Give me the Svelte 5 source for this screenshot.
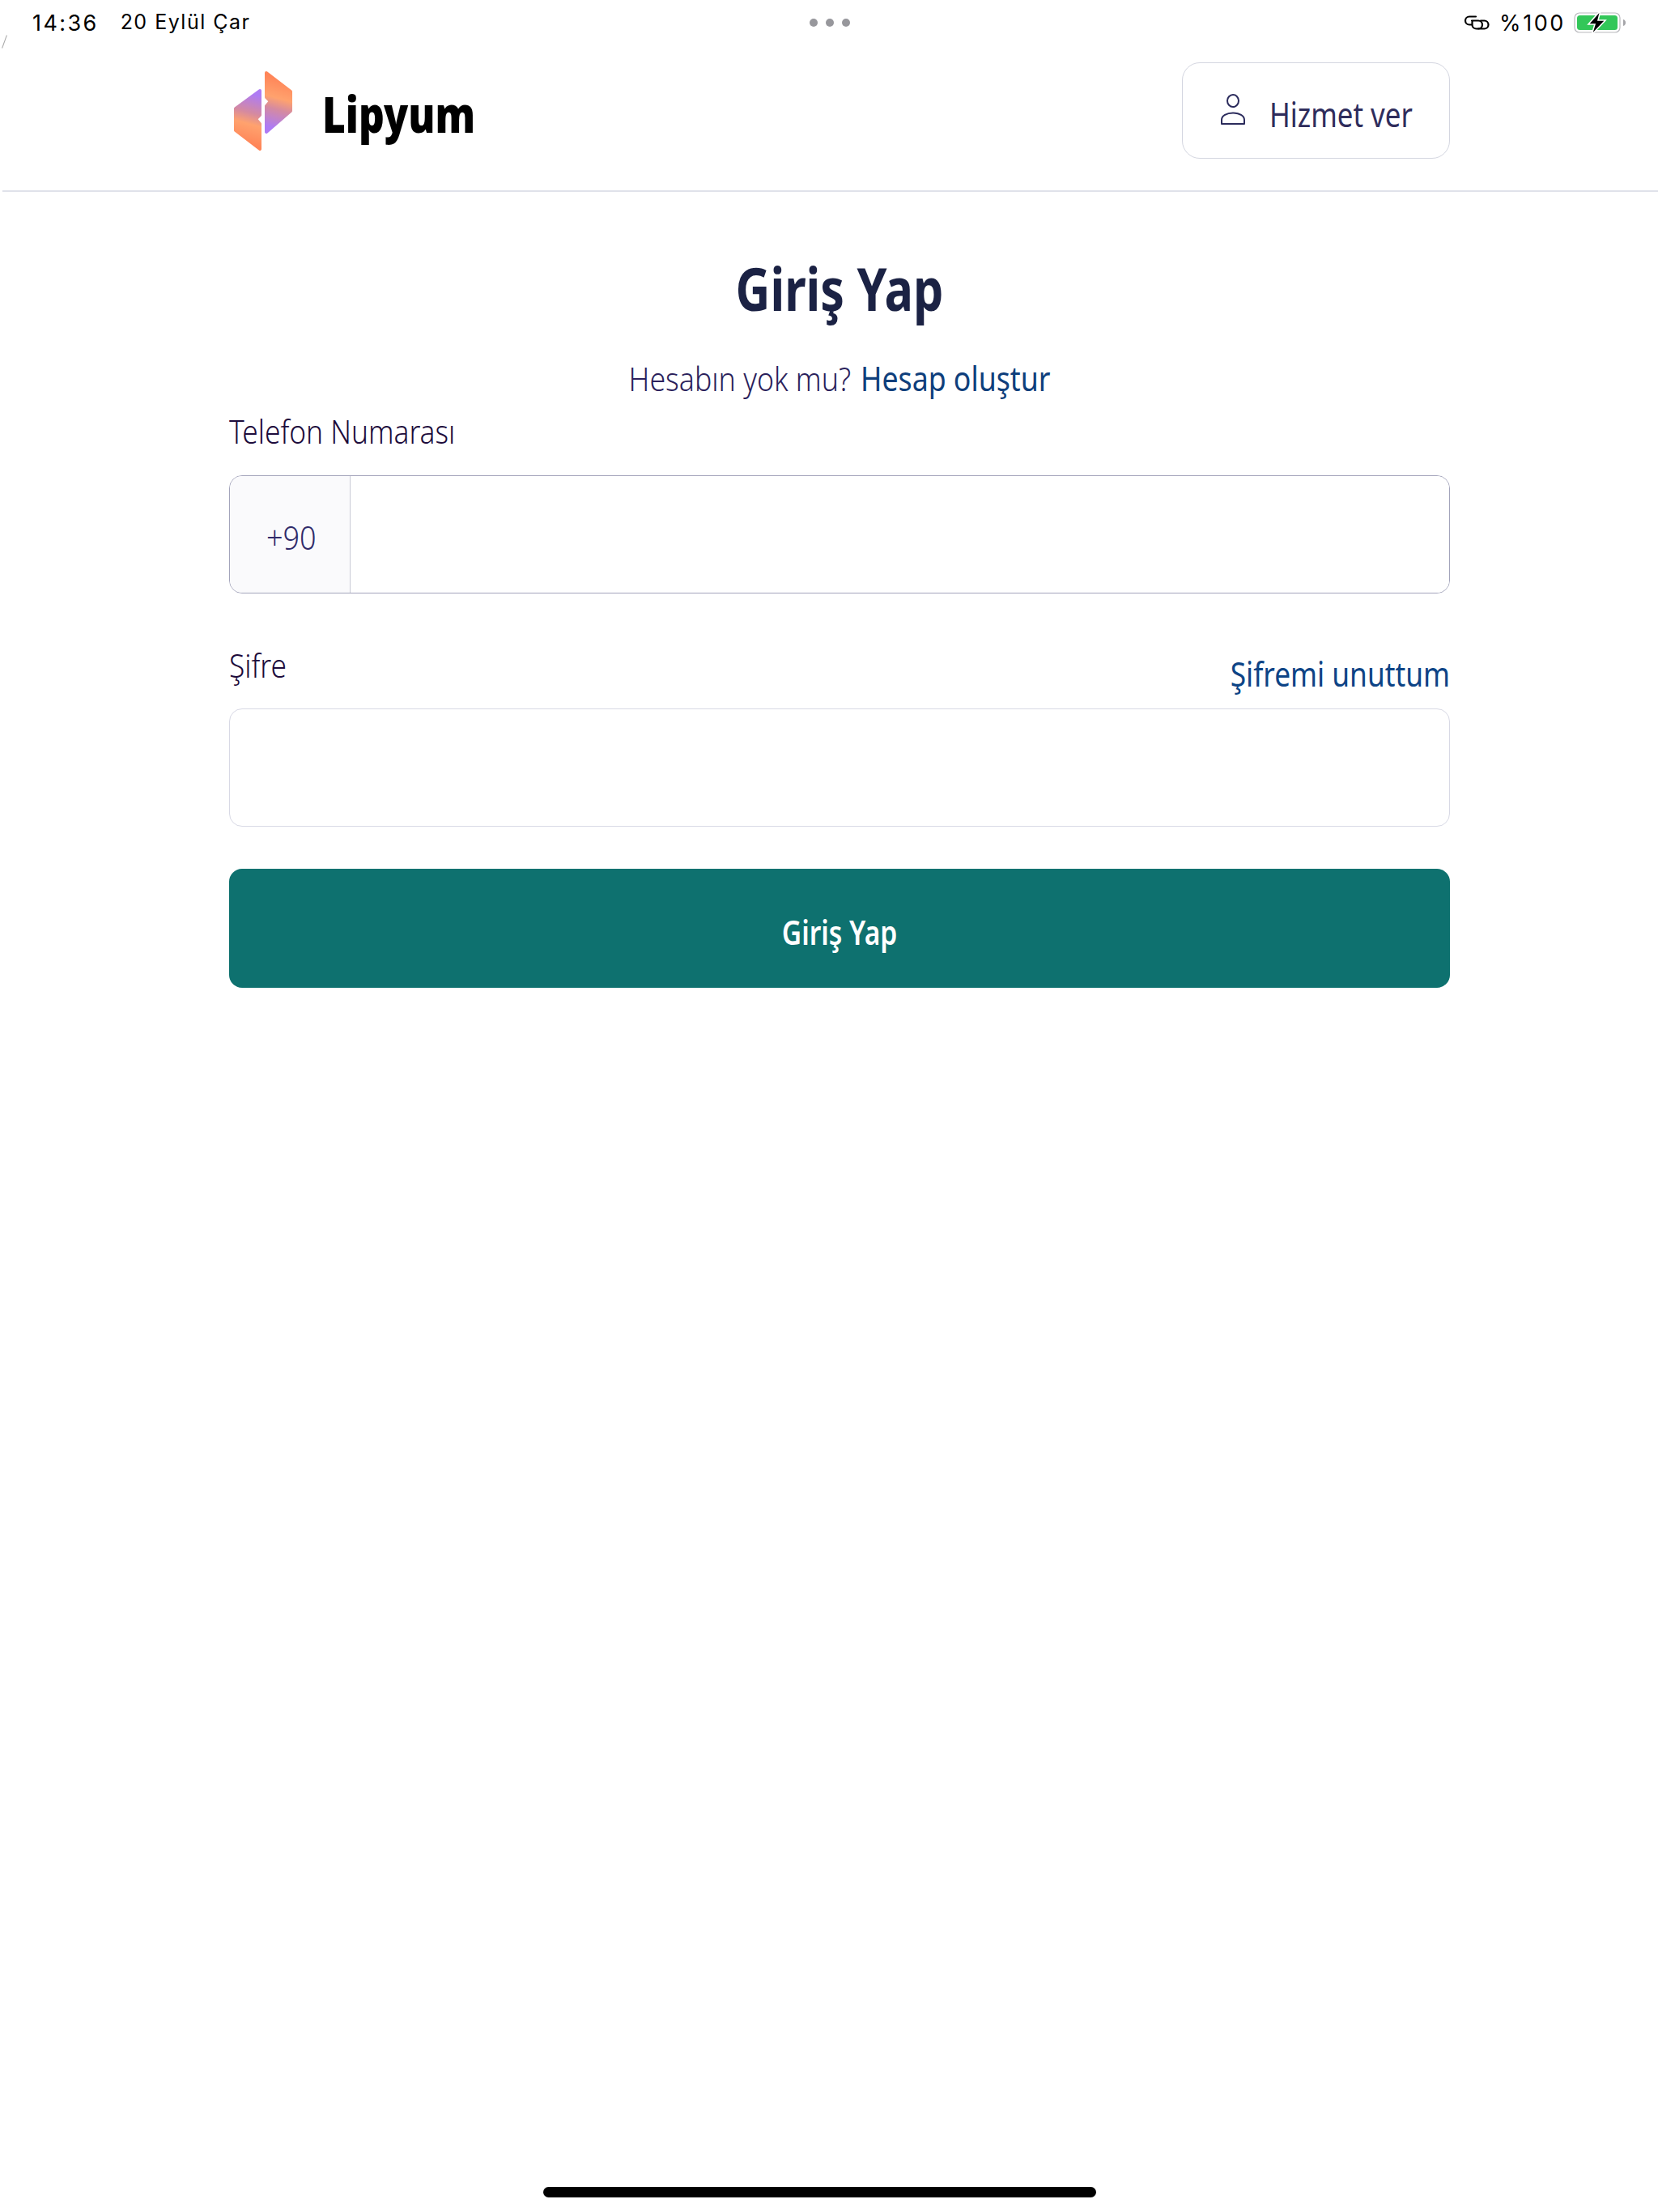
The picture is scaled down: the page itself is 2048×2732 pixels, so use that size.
<script>
	let phone = $state('');
	let password = $state('');
</script>

<div class="page">
	<div class="status">
		<div class="status-left">
			<span>14:36</span>
			<span>20 Eylül Çar</span>
		</div>
		<div class="dots"><i></i><i></i><i></i></div>
		<div class="status-right">
			<svg class="link" width="34" height="20" viewBox="0 0 34 20" fill="none" stroke="#000" stroke-width="2.200" stroke-linecap="round" aria-hidden="true">
				<path d="M16 2.500H8a5 5 0 0 0 0 10h3" />
				<path d="M11 7.500h8a5 5 0 0 1 0 10h-2.500a5 5 0 0 1-5-5V7.500" />
				<path d="M22 7.500h4.500a5 5 0 0 1 0 10H19" />
			</svg>
			<span class="percent">%100</span>
			<svg class="battery" width="66" height="30" viewBox="0 0 66 30" aria-hidden="true">
				<rect x="1" y="3" width="56" height="24" rx="6" fill="#fff" stroke="#b9b9bd" stroke-width="1.2" />
				<rect x="4" y="6" width="50" height="18" rx="3.500" fill="#33c759" />
				<path d="M61 11c2 .6 3 2 3 4s-1 3.400-3 4z" fill="#a5a5a9" />
				<path d="M33 0 L18 17 H26 L22 30 L39 12 H30 Z" fill="#000" stroke="#fff" stroke-width="1.600" />
			</svg>
		</div>
	</div>
	<span class="corner"></span>

	<header class="topbar">
		<div class="brand">
			<svg class="logo" width="74" height="100" viewBox="0 0 74 100" aria-hidden="true">
				<defs>
					<linearGradient id="logo-r" gradientUnits="userSpaceOnUse" x1="60" y1="10" x2="42" y2="76">
						<stop offset="0" stop-color="#ff8558" />
						<stop offset="0.36" stop-color="#ffa26e" />
						<stop offset="0.56" stop-color="#d58aa0" />
						<stop offset="0.9" stop-color="#ae7bf4" />
					</linearGradient>
					<linearGradient id="logo-l" gradientUnits="userSpaceOnUse" x1="14" y1="90" x2="32" y2="24">
						<stop offset="0" stop-color="#ff8558" />
						<stop offset="0.36" stop-color="#ffa26e" />
						<stop offset="0.56" stop-color="#d58aa0" />
						<stop offset="0.9" stop-color="#ae7bf4" />
					</linearGradient>
				</defs>
				<path d="M41 3 L71 26 V50 L41 76 V44 L46 38 L41 33 Z" fill="url(#logo-r)" stroke="url(#logo-r)" stroke-width="4" stroke-linejoin="round" />
				<path d="M33 25 L3 47 V74 L33 97 V66 L28 60 L33 55 Z" fill="url(#logo-l)" stroke="url(#logo-l)" stroke-width="4" stroke-linejoin="round" />
			</svg>
			<span class="brand-name">Lipyum</span>
		</div>
		<button class="serve" type="button">
			<svg width="30" height="38" viewBox="0 0 30 38" fill="none" stroke="#2b2b5c" stroke-width="2" aria-hidden="true">
				<ellipse cx="15" cy="8.500" rx="7" ry="7.500" />
				<path d="M1 37V32C1 27 7 23.500 15 23.500S29 27 29 32V37Z" stroke-linejoin="round" />
			</svg>
			<span>Hizmet ver</span>
		</button>
	</header>

	<main class="content">
		<h1>Giriş Yap</h1>
		<p class="signup">Hesabın yok mu? <a href="#signup">Hesap oluştur</a></p>

		<label class="field-label phone-label" for="phone">Telefon Numarası</label>
		<div class="phone-box">
			<span class="prefix"><span>+90</span></span>
			<input id="phone" type="tel" bind:value={phone} />
		</div>

		<div class="password-head">
			<label class="field-label" for="password">Şifre</label>
			<a href="#forgot">Şifremi unuttum</a>
		</div>
		<input id="password" class="password" type="password" bind:value={password} />

		<button class="submit" type="button"><span>Giriş Yap</span></button>
	</main>

	<div class="home-bar"></div>
</div>

<style>
	:global(body) {
		background: #fff;
	}

	.page {
		position: relative;
		height: 2732px;
		display: flex;
		flex-direction: column;
		overflow: hidden;
		font-family: "Noto Sans", "Open Sans", sans-serif;
	}

	.status {
		height: 56px;
		padding: 0 38px 0 40px;
		display: grid;
		grid-template-columns: 1fr auto 1fr;
		align-items: center;
		font-family: "Inter", sans-serif;
		font-size: 27px;
		color: #000;
	}

	.status-left {
		display: flex;
		gap: 27px;
		letter-spacing: 2.400px;
	}

	.status-left span:last-child {
		font-size: 25px;
		letter-spacing: 1.500px;
	}

	.dots {
		display: flex;
		gap: 10px;
		margin-left: -1px;
	}

	.dots i {
		width: 10px;
		height: 10px;
		border-radius: 50%;
		background: #97979c;
	}

	.status-right {
		display: flex;
		align-items: center;
		justify-content: flex-end;
		gap: 10px;
	}

	.link {
		margin-right: 1px;
	}

	.percent {
		font-size: 27px;
		letter-spacing: 2.600px;
	}

	.corner {
		position: absolute;
		left: 5px;
		top: 43px;
		width: 1px;
		height: 17px;
		background: #a9a9a9;
		transform: rotate(20deg);
	}

	.topbar {
		margin-left: 3px;
		padding: 21px 257px 39px 285px;
		display: flex;
		justify-content: space-between;
		align-items: center;
		border-bottom: 2px solid #e0e2ea;
	}

	.brand {
		display: flex;
		align-items: center;
		gap: 36px;
	}

	.brand-name {
		margin-top: 6px;
		font-size: 62px;
		line-height: 70px;
		font-weight: 900;
		color: #000;
		transform: scaleX(0.8);
		transform-origin: left center;
	}

	.serve {
		width: 331px;
		height: 119px;
		padding: 0 0 0 47px;
		display: flex;
		align-items: center;
		gap: 30px;
		background: #fff;
		border: 1.500px solid #d4d6e0;
		border-radius: 22px;
		font: inherit;
		font-size: 42px;
		color: #2f2d5c;
	}

	.serve svg {
		margin-top: -3px;
	}

	.serve span {
		margin-top: 8px;
		transform: scaleX(0.83);
		transform-origin: left center;
	}

	.content {
		padding: 0 257px 0 283px;
		display: flex;
		flex-direction: column;
	}

	h1 {
		margin: 69px 0 0;
		font-size: 74px;
		line-height: 100px;
		font-weight: 700;
		color: #1b2244;
		text-align: center;
		transform: scaleX(0.8);
	}

	.signup {
		margin: 33px 0 0;
		font-size: 41px;
		line-height: 56px;
		font-weight: 300;
		color: #2b1f5c;
		text-align: center;
		transform: scaleX(0.87);
	}

	.signup a {
		margin-left: 3px;
		color: #0f3f7c;
		font-weight: 400;
		text-decoration: none;
	}

	.field-label {
		font-size: 41px;
		line-height: 56px;
		font-weight: 300;
		color: #1d0c3c;
		transform: scaleX(0.86);
		transform-origin: left center;
	}

	.phone-label {
		margin-top: 9px;
	}

	.phone-box {
		margin-top: 27px;
		height: 146px;
		box-sizing: border-box;
		display: flex;
		border: 1.500px solid #a3a4bb;
		border-radius: 16px;
		overflow: hidden;
	}

	.prefix {
		width: 149px;
		box-sizing: border-box;
		padding: 6px 0 0 45px;
		display: flex;
		align-items: center;
		background: #fafafc;
		border-right: 1.500px solid #c9cad6;
		font-size: 40px;
		font-weight: 300;
		color: #2f2a6a;
	}

	.prefix span {
		transform: scaleX(0.9);
		transform-origin: left center;
	}

	input {
		border: none;
		outline: none;
		background: #fff;
		font: inherit;
	}

	.phone-box input {
		flex: 1;
		min-width: 0;
	}

	.password-head {
		margin-top: 60px;
		display: flex;
		justify-content: space-between;
		align-items: flex-start;
	}

	.password-head a {
		margin-top: 11px;
		font-size: 42px;
		line-height: 56px;
		color: #0d4486;
		text-decoration: none;
		transform: scaleX(0.84);
		transform-origin: right center;
	}

	.password {
		margin-top: 15px;
		height: 146px;
		box-sizing: border-box;
		border: 1.500px solid #d8d9e5;
		border-radius: 16px;
	}

	.submit {
		margin-top: 52px;
		height: 147px;
		border: none;
		border-radius: 16px;
		background: #0e716f;
		color: #fff;
		font: inherit;
		font-size: 42px;
		font-weight: 600;
		padding-top: 8px;
	}

	.submit span {
		display: inline-block;
		transform: scaleX(0.8);
	}

	.home-bar {
		margin: auto 0 18px 671px;
		width: 683px;
		height: 13px;
		border-radius: 7px;
		background: #000;
	}
</style>
